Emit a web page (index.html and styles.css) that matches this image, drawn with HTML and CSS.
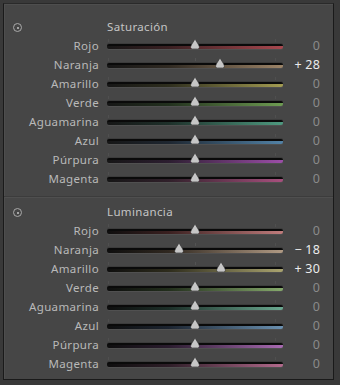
FILE: index.html
```html
<!DOCTYPE html>
<html lang="es">
<head>
  <meta charset="UTF-8" />
  <title>HSL</title>
  <link rel="stylesheet" href="styles.css">
</head>
<body>
  <div class="panel">
    <section class="group">
      <div class="group-head">
        <span class="target"></span>
        <span class="group-title">Saturación</span>
      </div>
      <div class="row"><span class="label">Rojo</span><div class="track c-red"><i class="tick"></i><svg class="thumb" style="left: 50%" viewBox="0 0 10 9"><path d="M5 0 L8.2 5.2 Q10 8.6 7.6 9 L2.4 9 Q0 8.6 1.8 5.2 Z"/></svg></div><span class="value">0</span></div>
      <div class="row"><span class="label">Naranja</span><div class="track c-orange"><i class="tick"></i><svg class="thumb" style="left: 64%" viewBox="0 0 10 9"><path d="M5 0 L8.2 5.2 Q10 8.6 7.6 9 L2.4 9 Q0 8.6 1.8 5.2 Z"/></svg></div><span class="value on">+ 28</span></div>
      <div class="row"><span class="label">Amarillo</span><div class="track c-yellow"><i class="tick"></i><svg class="thumb" style="left: 50%" viewBox="0 0 10 9"><path d="M5 0 L8.2 5.2 Q10 8.6 7.6 9 L2.4 9 Q0 8.6 1.8 5.2 Z"/></svg></div><span class="value">0</span></div>
      <div class="row"><span class="label">Verde</span><div class="track c-green"><i class="tick"></i><svg class="thumb" style="left: 50%" viewBox="0 0 10 9"><path d="M5 0 L8.2 5.2 Q10 8.6 7.6 9 L2.4 9 Q0 8.6 1.8 5.2 Z"/></svg></div><span class="value">0</span></div>
      <div class="row"><span class="label">Aguamarina</span><div class="track c-aqua"><i class="tick"></i><svg class="thumb" style="left: 50%" viewBox="0 0 10 9"><path d="M5 0 L8.2 5.2 Q10 8.6 7.6 9 L2.4 9 Q0 8.6 1.8 5.2 Z"/></svg></div><span class="value">0</span></div>
      <div class="row"><span class="label">Azul</span><div class="track c-blue"><i class="tick"></i><svg class="thumb" style="left: 50%" viewBox="0 0 10 9"><path d="M5 0 L8.2 5.2 Q10 8.6 7.6 9 L2.4 9 Q0 8.6 1.8 5.2 Z"/></svg></div><span class="value">0</span></div>
      <div class="row"><span class="label">Púrpura</span><div class="track c-purple"><i class="tick"></i><svg class="thumb" style="left: 50%" viewBox="0 0 10 9"><path d="M5 0 L8.2 5.2 Q10 8.6 7.6 9 L2.4 9 Q0 8.6 1.8 5.2 Z"/></svg></div><span class="value">0</span></div>
      <div class="row"><span class="label">Magenta</span><div class="track c-magenta"><i class="tick"></i><svg class="thumb" style="left: 50%" viewBox="0 0 10 9"><path d="M5 0 L8.2 5.2 Q10 8.6 7.6 9 L2.4 9 Q0 8.6 1.8 5.2 Z"/></svg></div><span class="value">0</span></div>
    </section>

    <div class="divider"></div>

    <section class="group lum">
      <div class="group-head">
        <span class="target"></span>
        <span class="group-title">Luminancia</span>
      </div>
      <div class="row"><span class="label">Rojo</span><div class="track c-red"><i class="tick"></i><svg class="thumb" style="left: 50%" viewBox="0 0 10 9"><path d="M5 0 L8.2 5.2 Q10 8.6 7.6 9 L2.4 9 Q0 8.6 1.8 5.2 Z"/></svg></div><span class="value">0</span></div>
      <div class="row"><span class="label">Naranja</span><div class="track c-orange"><i class="tick"></i><svg class="thumb" style="left: 41%" viewBox="0 0 10 9"><path d="M5 0 L8.2 5.2 Q10 8.6 7.6 9 L2.4 9 Q0 8.6 1.8 5.2 Z"/></svg></div><span class="value on">&minus; 18</span></div>
      <div class="row"><span class="label">Amarillo</span><div class="track c-yellow"><i class="tick"></i><svg class="thumb" style="left: 65%" viewBox="0 0 10 9"><path d="M5 0 L8.2 5.2 Q10 8.6 7.6 9 L2.4 9 Q0 8.6 1.8 5.2 Z"/></svg></div><span class="value on">+ 30</span></div>
      <div class="row"><span class="label">Verde</span><div class="track c-green"><i class="tick"></i><svg class="thumb" style="left: 50%" viewBox="0 0 10 9"><path d="M5 0 L8.2 5.2 Q10 8.6 7.6 9 L2.4 9 Q0 8.6 1.8 5.2 Z"/></svg></div><span class="value">0</span></div>
      <div class="row"><span class="label">Aguamarina</span><div class="track c-aqua"><i class="tick"></i><svg class="thumb" style="left: 50%" viewBox="0 0 10 9"><path d="M5 0 L8.2 5.2 Q10 8.6 7.6 9 L2.4 9 Q0 8.6 1.8 5.2 Z"/></svg></div><span class="value">0</span></div>
      <div class="row"><span class="label">Azul</span><div class="track c-blue"><i class="tick"></i><svg class="thumb" style="left: 50%" viewBox="0 0 10 9"><path d="M5 0 L8.2 5.2 Q10 8.6 7.6 9 L2.4 9 Q0 8.6 1.8 5.2 Z"/></svg></div><span class="value">0</span></div>
      <div class="row"><span class="label">Púrpura</span><div class="track c-purple"><i class="tick"></i><svg class="thumb" style="left: 50%" viewBox="0 0 10 9"><path d="M5 0 L8.2 5.2 Q10 8.6 7.6 9 L2.4 9 Q0 8.6 1.8 5.2 Z"/></svg></div><span class="value">0</span></div>
      <div class="row"><span class="label">Magenta</span><div class="track c-magenta"><i class="tick"></i><svg class="thumb" style="left: 50%" viewBox="0 0 10 9"><path d="M5 0 L8.2 5.2 Q10 8.6 7.6 9 L2.4 9 Q0 8.6 1.8 5.2 Z"/></svg></div><span class="value">0</span></div>
    </section>
  </div>
</body>
</html>
```

FILE: styles.css
```css
html, body {
  margin: 0;
  padding: 0;
  background: #393939;
  font-family: 'Noto Sans', 'DejaVu Sans', sans-serif;
  font-size: 11.5px;
  letter-spacing: 0.35px;
  color: #b9b9b9;
}

/* === Panel frame === */
.panel {
  box-sizing: border-box;
  margin: 3px 0 0 3px;
  width: 331px;
  height: 377px;
  background: #464646;
  border: 1px solid #1a1a1a;
  border-top-color: #2a2a2a;
  box-shadow: inset 1px 1px 0 #4e4e4e;
}

.group {
  padding: 13px 0 8px 0;
}

.group.lum {
  padding: 4px 0 0 0;
}

.divider {
  height: 1px;
  background: #3c3c3c;
  border-bottom: 1px solid #4f4f4f;
}

/* === Section header === */
.group-head {
  display: flex;
  align-items: center;
  height: 19px;
}

.target {
  box-sizing: border-box;
  width: 9px;
  height: 9px;
  margin: 2px 0 0 9px;
  border: 1.5px solid #a9a9a9;
  border-radius: 50%;
  display: flex;
  align-items: center;
  justify-content: center;
}

.target::after {
  content: '';
  width: 2px;
  height: 2px;
  border-radius: 50%;
  background: #c4c4c4;
}

.group-title {
  margin-left: 85px;
  color: #c4c4c4;
}

/* === Slider rows === */
.row {
  display: flex;
  align-items: center;
  height: 19px;
}

.label {
  width: 95px;
  text-align: right;
}

.track {
  position: relative;
  box-sizing: border-box;
  width: 176px;
  height: 5px;
  margin: 2px 0 0 8px;
  border-radius: 2px;
  border-top: 2px solid #0a0a0a;
  box-shadow: 0 1px 0 #505050, 0 -1px 0 #3c3c3c;
}

.tick {
  position: absolute;
  left: 50%;
  top: -7px;
  width: 1px;
  height: 3px;
  background: #535353;
}

.tick::before, .tick::after {
  content: '';
  position: absolute;
  top: 0;
  width: 1px;
  height: 3px;
  background: #4f4f4f;
}

.tick::before { left: -87px; }
.tick::after { left: 80px; }

.thumb {
  position: absolute;
  top: -7px;
  width: 11px;
  height: 10px;
  transform: translateX(-50%);
  fill: #c6c6c6;
  stroke: #262626;
  stroke-width: 0.5;
}

.value {
  width: 37px;
  text-align: right;
  color: #8a8a8a;
  font-size: 12.5px;
  letter-spacing: 0.2px;
}

.value.on {
  color: #ececec;
}

/* track colours */
.c-red     { background: linear-gradient(to right, #161616, #3a2022 35%, #a8484f); }
.c-orange  { background: linear-gradient(to right, #161616, #302a22 35%, #9c8468); }
.c-yellow  { background: linear-gradient(to right, #161616, #2e2e1e 35%, #a39c52); }
.c-green   { background: linear-gradient(to right, #161616, #22301e 35%, #6e9c52); }
.c-aqua    { background: linear-gradient(to right, #161616, #1e302a 35%, #4e9a80); }
.c-blue    { background: linear-gradient(to right, #161616, #1e2630 35%, #5282a6); }
.c-purple  { background: linear-gradient(to right, #161616, #2c1e30 35%, #9c4ea8); }
.c-magenta { background: linear-gradient(to right, #161616, #30202a 35%, #a8507e); }

.lum .c-red     { background: linear-gradient(to right, #0e0e0e, #3a2020 35%, #c07c7c); }
.lum .c-orange  { background: linear-gradient(to right, #0e0e0e, #302820 35%, #b09a84); }
.lum .c-yellow  { background: linear-gradient(to right, #0e0e0e, #2e2c1c 35%, #aaa470); }
.lum .c-green   { background: linear-gradient(to right, #0e0e0e, #222e1c 35%, #86aa6c); }
.lum .c-aqua    { background: linear-gradient(to right, #0e0e0e, #1c2e28 35%, #6aa890); }
.lum .c-blue    { background: linear-gradient(to right, #0e0e0e, #1c2430 35%, #6a90b0); }
.lum .c-purple  { background: linear-gradient(to right, #0e0e0e, #2a1c2e 35%, #a86ab2); }
.lum .c-magenta { background: linear-gradient(to right, #0e0e0e, #2e1e28 35%, #b26a8c); }
```
